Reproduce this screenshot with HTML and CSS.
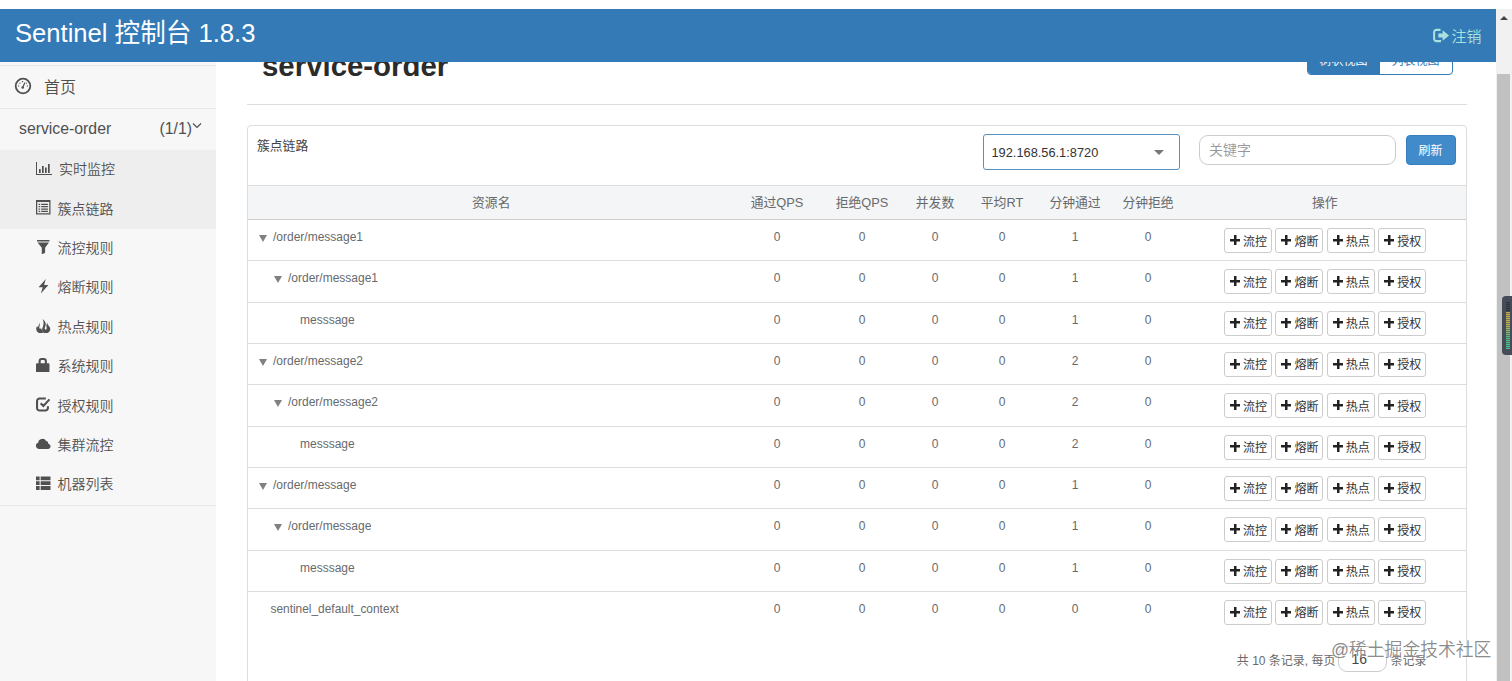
FILE: index.html
```
<!DOCTYPE html>
<html lang="zh-CN">
<head>
    <meta charset="UTF-8">
    <title>Sentinel 控制台</title>
    <link rel="stylesheet" href="styles.css">
</head>
<body>

<div class="window">
    <div class="app">
        <header class="navbar">
            <span class="brand">Sentinel 控制台 1.8.3</span>
            <a class="logout">
                <svg viewBox="0 0 16 16" width="17" height="17"><path d="M8 2.700H4.200A2.200 2.200 0 0 0 2 4.900v6.200a2.200 2.200 0 0 0 2.200 2.200H8.500" fill="none" stroke="currentColor" stroke-width="1.900"/><path d="M6 6.200h4V3l6 5-6 5V9.800H6z" fill="currentColor"/></svg>
                注销
            </a>
        </header>

        <div class="body">
            <nav class="sidebar">
                <div class="home">
                    <svg viewBox="0 0 18 18" width="18" height="18"><circle cx="9" cy="9" r="7.300" fill="none" stroke="currentColor" stroke-width="1.800"/><path d="M8.700 10.500l2.200-5M4 9h1.200M12.800 9H14M5.500 5.800l.8.800M8.500 4v1.300M12.300 6.500l.6-.6" fill="none" stroke="currentColor" stroke-width="1.200"/><circle cx="8.700" cy="10.500" r="1.300" fill="currentColor"/></svg>
                    <span>首页</span>
                </div>
                <div class="service">
                    <span>service-order</span>
                    <span class="count">(1/1)<svg viewBox="0 0 10 8" width="10" height="8"><path d="M1 1.500l4 4 4-4" fill="none" stroke="currentColor" stroke-width="1.200"/></svg></span>
                </div>
                <ul class="menu">
                    <li class="active wide"><svg viewBox="0 0 16 14"><path d="M0 1h1v12h15v1H0zM3 8h1.700v4H3zM6 5h1.700v7H6zM9 6.500h1.700v5.500H9zM12 3h1.700v9H12z"/></svg>实时监控</li>
                    <li class="active"><svg viewBox="0 0 14 14"><path fill-rule="evenodd" d="M0 0h14v14H0zM1.200 2v10.800h11.600V2zM2.500 3.500h1.500v1.300H2.500zM5 3.500h6.500v1.300H5zM2.500 5.800h1.500v1.300H2.500zM5 5.800h6.500v1.300H5zM2.500 8.100h1.500v1.300H2.500zM5 8.100h6.500v1.300H5zM2.500 10.400h1.500v1.300H2.500zM5 10.400h6.500v1.300H5z"/></svg>簇点链路</li>
                    <li><svg viewBox="0 0 14 14"><path d="M1 0h12v1.500H1zM1.500 2.300h11L8.800 7.500v4.800L5.600 14V7.500z"/></svg>流控规则</li>
                    <li><svg viewBox="0 0 14 14"><path d="M9.500 0L2.500 8h4L4.700 14 12 5.700H7.800z"/></svg>熔断规则</li>
                    <li><svg viewBox="0 0 14 14"><path d="M6.300 0c2.800 2 3.800 4.500 2.700 7-.8 1.700-.8 2.700 0 3.200 1 .4 1.600-.8 1.200-2.400-.3-1.500-.2-3 .8-4.300 0 1.500.7 2.300 1.700 3.400 1.900 2.300 1.300 5.500-1.900 6.800-.9.300-1.800.2-2.600-.1C6.300 12.800 5.300 11 6.300 8.500 7.500 5.500 7.800 2.500 6.300 0zM3.600 3.300c.3 1.500.2 2.400-.2 3.500-.4 1.300-.2 2.500.5 2.800.6.100.8-.6.6-1.500 1.200 1.300 1.100 3.500 2.500 5.400-1.400.7-3.400.6-4.900-.4C-.3 11.300-.3 8.300 1.300 6.700c0 .7.200 1.200.6 1.300C2 6.200 3.500 5.500 3.600 3.300z"/></svg>热点规则</li>
                    <li><svg viewBox="0 0 14 14"><path fill-rule="evenodd" d="M2.500 5V3a3 3 0 0 1 3-3h2a3 3 0 0 1 3 3v2H12a1 1 0 0 1 1 1v7a1 1 0 0 1-1 1H1a1 1 0 0 1-1-1V6a1 1 0 0 1 1-1zM4.500 5h4V3a1 1 0 0 0-1-1h-2a1 1 0 0 0-1 1z"/></svg>系统规则</li>
                    <li><svg viewBox="0 0 14 14"><path d="M9.500 1.500H3.500a2.500 2.500 0 0 0-2.500 2.500v6.500A2.500 2.500 0 0 0 3.500 13H9a2.500 2.500 0 0 0 2.500-2.500V9M4.500 6l2.600 2.700L13 2.300" fill="none" stroke="currentColor" stroke-width="2"/></svg>授权规则</li>
                    <li><svg viewBox="0 0 14 14"><path d="M2.800 11.500a3 3 0 0 1-.7-5.900 4.100 4.100 0 0 1 7.700-1.700 2.600 2.600 0 0 1 2.200 2.500A2.600 2.600 0 0 1 12 11.500z"/></svg>集群流控</li>
                    <li><svg viewBox="0 0 14 14"><path d="M0 .500h3.500v3.500H0zM4.500.500H14v3.500H4.500zM0 5h3.500v3.700H0zM4.500 5H14v3.700H4.500zM0 9.700h3.500v3.800H0zM4.500 9.700H14v3.800H4.500z"/></svg>机器列表</li>
                </ul>
            </nav>

            <main class="content">
                <div class="page-head">
                    <h1>service-order</h1>
                    <div class="view-switch"><span class="on">树状视图</span><span>列表视图</span></div>
                </div>

                <section class="card">
                    <div class="card-head">
                        <span class="card-title">簇点链路</span>
                        <div class="machine">192.168.56.1:8720<i class="caret"></i></div>
                        <input class="search" type="text" placeholder="关键字">
                        <button class="refresh">刷新</button>
                    </div>

                    <div class="table">
                        <div class="row thead">
                            <span>资源名</span><span>通过QPS</span><span>拒绝QPS</span><span>并发数</span><span>平均RT</span><span>分钟通过</span><span>分钟拒绝</span><span>操作</span>
                        </div>
                        <div class="row">
                            <span class="name lv1"><i class="fold"></i>/order/message1</span><span>0</span><span>0</span><span>0</span><span>0</span><span>1</span><span>0</span>
                            <div class="ops"><button>流控</button><button>熔断</button><button>热点</button><button>授权</button></div>
                        </div>
                        <div class="row">
                            <span class="name lv2"><i class="fold"></i>/order/message1</span><span>0</span><span>0</span><span>0</span><span>0</span><span>1</span><span>0</span>
                            <div class="ops"><button>流控</button><button>熔断</button><button>热点</button><button>授权</button></div>
                        </div>
                        <div class="row">
                            <span class="name lv3">messsage</span><span>0</span><span>0</span><span>0</span><span>0</span><span>1</span><span>0</span>
                            <div class="ops"><button>流控</button><button>熔断</button><button>热点</button><button>授权</button></div>
                        </div>
                        <div class="row">
                            <span class="name lv1"><i class="fold"></i>/order/message2</span><span>0</span><span>0</span><span>0</span><span>0</span><span>2</span><span>0</span>
                            <div class="ops"><button>流控</button><button>熔断</button><button>热点</button><button>授权</button></div>
                        </div>
                        <div class="row">
                            <span class="name lv2"><i class="fold"></i>/order/message2</span><span>0</span><span>0</span><span>0</span><span>0</span><span>2</span><span>0</span>
                            <div class="ops"><button>流控</button><button>熔断</button><button>热点</button><button>授权</button></div>
                        </div>
                        <div class="row">
                            <span class="name lv3">messsage</span><span>0</span><span>0</span><span>0</span><span>0</span><span>2</span><span>0</span>
                            <div class="ops"><button>流控</button><button>熔断</button><button>热点</button><button>授权</button></div>
                        </div>
                        <div class="row">
                            <span class="name lv1"><i class="fold"></i>/order/message</span><span>0</span><span>0</span><span>0</span><span>0</span><span>1</span><span>0</span>
                            <div class="ops"><button>流控</button><button>熔断</button><button>热点</button><button>授权</button></div>
                        </div>
                        <div class="row">
                            <span class="name lv2"><i class="fold"></i>/order/message</span><span>0</span><span>0</span><span>0</span><span>0</span><span>1</span><span>0</span>
                            <div class="ops"><button>流控</button><button>熔断</button><button>热点</button><button>授权</button></div>
                        </div>
                        <div class="row">
                            <span class="name lv3">messsage</span><span>0</span><span>0</span><span>0</span><span>0</span><span>1</span><span>0</span>
                            <div class="ops"><button>流控</button><button>熔断</button><button>热点</button><button>授权</button></div>
                        </div>
                        <div class="row">
                            <span class="name root">sentinel_default_context</span><span>0</span><span>0</span><span>0</span><span>0</span><span>0</span><span>0</span>
                            <div class="ops"><button>流控</button><button>熔断</button><button>热点</button><button>授权</button></div>
                        </div>
                    </div>

                    <div class="pager">
                        <span>共 10 条记录, 每页</span>
                        <input type="text" value="16">
                        <span>条记录</span>
                    </div>
                </section>
            </main>
        </div>
    </div>

    <div class="scrollbar">
        <i class="up"></i>
        <div class="thumb"></div>
    </div>
</div>

<div class="meter"><i></i></div>
<div class="watermark">@稀土掘金技术社区</div>

</body>
</html>
```
FILE: styles.css
```
* {
    box-sizing: border-box;
}
body {
    margin: 0;
    height: 681px;
    overflow: hidden;
    position: relative;
    background: #fff;
    color: #676a6c;
    font-family: "Liberation Sans", Arial, "Noto Sans CJK SC", sans-serif;
    font-size: 12px;
}
button, input {
    font-family: inherit;
    margin: 0;
}
.window {
    display: flex;
    height: 681px;
    padding-top: 9px;
}
.app {
    width: 1495.5px;
    display: flex;
    flex-direction: column;
}
.navbar {
    height: 53px;
    flex: none;
    background: #337ab7;
    color: #fff;
    display: flex;
    justify-content: space-between;
    padding: 0 14px 0 15px;
}
.brand {
    font-size: 25.6px;
    line-height: 48px;
}
.logout {
    display: flex;
    align-items: center;
    gap: 2px;
    font-size: 15px;
    font-weight: 350;
    color: #a9e2dc;
}
.body {
    flex: 1;
    min-height: 0;
    display: flex;
    overflow: hidden;
}

/* sidebar */
.sidebar {
    width: 216px;
    flex: none;
    background: #f7f7f7;
    color: #505050;
    padding-top: 3px;
}
.home {
    height: 44px;
    display: flex;
    align-items: center;
    gap: 12px;
    padding: 0 14px 3px;
    border-top: 1px solid #e7e7e7;
    border-bottom: 1px solid #e7e7e7;
    font-size: 16px;
    font-weight: 350;
}
.service {
    height: 41px;
    display: flex;
    justify-content: space-between;
    align-items: center;
    padding: 0 14px 1px 19px;
    font-size: 15.8px;
}
.count svg {
    vertical-align: 4px;
}
.menu {
    list-style: none;
    margin: 0;
    padding: 0;
    border-bottom: 1px solid #e7e7e7;
}
.menu li {
    height: 39.4px;
    display: flex;
    align-items: center;
    gap: 7px;
    padding: 0 0 3px 36px;
    font-size: 14px;
    font-weight: 350;
}
.menu li.active {
    background: #eee;
}
.menu svg {
    width: 14.500px;
    height: 14.500px;
    fill: currentColor;
}
.menu .wide svg {
    width: 16px;
    height: 14px;
}

/* content */
.content {
    flex: 1;
    padding: 0 29px 0 31px;
}
.page-head {
    height: 58px;
    margin: -15px 0 20px;
    padding: 0 14px 0 15px;
    display: flex;
    justify-content: space-between;
    align-items: flex-start;
    border-bottom: 1px solid #ddd;
}
h1 {
    margin: 0;
    font-size: 29.400px;
    line-height: 38px;
    color: #2b2b2b;
}
.view-switch {
    display: flex;
    height: 28px;
    width: 146px;
    border: 1px solid #337ab7;
    border-radius: 4px;
    overflow: hidden;
    color: #337ab7;
    text-align: center;
    line-height: 26px;
}
.view-switch span {
    flex: 1;
}
.view-switch .on {
    background: #337ab7;
    color: #fff;
}
.card {
    height: 600px;
    border: 1px solid #ddd;
    border-radius: 4px;
}
.card-head {
    height: 59px;
    display: flex;
    align-items: flex-start;
    padding: 9px 10px 0 9px;
}
.card-title {
    flex: 1;
    font-size: 12.8px;
    line-height: 21px;
    color: #444;
}
.machine {
    width: 197px;
    height: 36px;
    margin-top: -1px;
    margin-right: 19.500px;
    display: flex;
    justify-content: space-between;
    align-items: center;
    padding: 0 15px 0 8px;
    border: 1px solid #5a8fc4;
    border-radius: 3px;
    font-size: 12.8px;
    color: #333;
}
.caret {
    border: 5px solid transparent;
    border-top-color: #777;
    border-bottom: 0;
}
.search {
    width: 197px;
    height: 30px;
    margin-right: 9.500px;
    padding: 0 9px;
    border: 1px solid #ccc;
    border-radius: 9px;
    font-size: 14px;
}
.search::placeholder {
    color: #999;
    font-weight: 350;
}
.refresh {
    width: 50px;
    height: 30px;
    padding: 0 0 2px;
    border: 1px solid #357ebd;
    border-radius: 4px;
    background: #428bca;
    color: #fff;
    font-size: 12px;
}

/* resource table */
.row {
    display: grid;
    grid-template-columns: 486.5px 85px 85px 61px 73px 73px 73px 280.5px;
    height: 41.33px;
    border-bottom: 1px solid #ddd;
    line-height: 18px;
    padding-top: 8px;
    text-align: center;
}
.row:last-child {
    border-bottom: 0;
}
.thead {
    height: 35px;
    padding: 0;
    line-height: 33px;
    font-size: 12.8px;
    background: #f3f5f6;
    border-top: 1px solid #ddd;
    border-bottom: 1px solid #ccc;
}
.name {
    text-align: left;
}
.lv1 {
    padding-left: 11px;
}
.lv2 {
    padding-left: 26px;
}
.lv3 {
    padding-left: 52px;
}
.root {
    padding-left: 22.5px;
    font-size: 11.9px;
}
.fold {
    display: inline-block;
    margin-right: 6px;
    border: 4.500px solid transparent;
    border-top: 7px solid #808080;
    border-bottom: 0;
    vertical-align: -1px;
}
.ops {
    display: flex;
    gap: 3.400px;
    padding-left: 39.5px;
}
.ops button {
    display: flex;
    align-items: center;
    gap: 3px;
    width: 48px;
    height: 25px;
    padding: 0 0 1px 5px;
    border: 1px solid #ccc;
    border-radius: 3px;
    background: #fff;
    color: #333;
    font-size: 12px;
}
.ops button::before {
    content: "";
    width: 10px;
    height: 10px;
    background:
        linear-gradient(#222, #222) center / 10px 2.500px no-repeat,
        linear-gradient(#222, #222) center / 2.500px 10px no-repeat;
}
.pager {
    display: flex;
    align-items: center;
    justify-content: flex-end;
    gap: 3px;
    padding: 13px 39px 0 0;
}
.pager input {
    width: 49px;
    height: 26px;
    padding: 0 0 0 12px;
    border: 1px solid #ccc;
    border-radius: 9px;
    font-size: 14px;
    color: #444;
}

/* window scrollbar */
.scrollbar {
    width: 16.500px;
    background: #f1f1f1;
    display: flex;
    flex-direction: column;
    align-items: center;
}
.up {
    margin: 7px 0 54px;
    border: 4px solid transparent;
    border-top: 0;
    border-bottom-color: #444;
}
.thumb {
    width: 13px;
    flex: 1;
    background: #c1c1c1;
}

/* floating overlays */
.meter {
    position: absolute;
    right: 0;
    top: 296px;
    width: 10px;
    height: 59px;
    padding: 6px 2px 6px 4px;
    border-radius: 4px 0 0 4px;
    background: #454b58;
}
.meter i {
    display: block;
    height: 47px;
    background:
        repeating-linear-gradient(transparent 0 1px, rgba(69, 75, 88, 0.6) 1px 2px),
        linear-gradient(#30343d 20%, #c9ac4b 22%, #b9b552 50%, #55b782 75%, #3fc48f);
}
.watermark {
    position: absolute;
    left: 1331px;
    top: 637px;
    font-size: 17.8px;
    line-height: 26px;
    font-weight: 350;
    white-space: nowrap;
    color: rgba(125, 125, 125, 0.9);
    text-shadow: 0 0 2px #fff;
}
```
